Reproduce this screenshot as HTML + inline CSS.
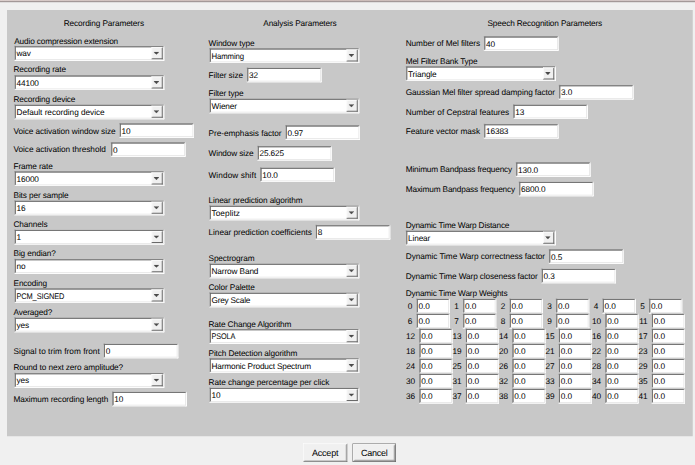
<!DOCTYPE html>
<html><head><meta charset="utf-8"><title>Parameters</title>
<style>
html,body{margin:0;padding:0;}
body{width:695px;height:465px;overflow:hidden;background:#f0f0f0;position:relative;}
.t0{position:absolute;left:0;top:0;width:695px;height:1px;background:linear-gradient(90deg,#dbcecc 0,#d2c3c0 15%,#cbbab6 45%,#d0c2c0 70%,#d4c8c8 100%);}
.t1{position:absolute;left:0;top:1px;width:695px;height:1px;background:#a39898;}
.t2{position:absolute;left:0;top:2px;width:695px;height:1px;background:#dfdddd;}
#ui{position:absolute;left:0;top:0;width:2781px;height:1860px;transform:scale(0.25);transform-origin:0 0;font-family:"Liberation Sans",sans-serif;font-size:33px;color:#000;text-rendering:geometricPrecision;letter-spacing:-0.48px;}
.panel{position:absolute;left:28px;top:40px;width:2743px;height:1705px;background:#c8c8c8;}
.l{position:absolute;white-space:nowrap;height:42px;line-height:42px;}
.s{position:absolute;box-sizing:border-box;background:#fff;border:6px solid;border-color:#a0a0a0 #fff #fff #a0a0a0;}
.s>i{position:absolute;left:-3px;top:-3px;right:-3px;bottom:-3px;border:3px solid;border-color:#696969 #e3e3e3 #e3e3e3 #696969;}
.s .tx{position:absolute;left:3px;top:4px;height:42px;line-height:42px;white-space:nowrap;}
.s .b{position:absolute;right:0;top:0;bottom:0;width:45px;box-sizing:border-box;background:#f0f0f0;border:3px solid;border-width:3px 4px 4px 3px;border-color:#fff #696969 #696969 #fff;}
.s .b svg{position:absolute;left:6px;top:15px;}
.g{position:absolute;white-space:nowrap;height:42px;line-height:42px;text-align:right;width:90px;}
.btn{position:absolute;box-sizing:border-box;background:#f0f0f0;font-size:36px;text-align:center;letter-spacing:-1px;}
</style></head><body>
<div id="ui">
<div class="panel"></div>
<div class="l" style="left:255px;top:70px;">Recording Parameters</div>
<div class="l" style="left:1053px;top:70px;">Analysis Parameters</div>
<div class="l" style="left:1950px;top:70px;letter-spacing:-0.58px;">Speech Recognition Parameters</div>
<div class="l" style="left:1623px;top:1152px;letter-spacing:-0.68px;">Dynamic Time Warp Weights</div>
<div class="l" style="left:57px;top:143px;letter-spacing:-0.59px;">Audio compression extension</div>
<div class="s" style="left:57px;top:183px;width:600px;height:60px;"><i></i><span class="tx" style="top:4px;">wav</span><span class="b"><svg width="21" height="12" viewBox="0 0 7 4"><path d="M0 0h7v1h-1v1h-1v1h-1v1h-1v-1h-1v-1h-1v-1h-1z" fill="#4a4a4a"/></svg></span></div>
<div class="l" style="left:54px;top:256px;">Recording rate</div>
<div class="s" style="left:57px;top:300px;width:600px;height:60px;"><i></i><span class="tx" style="top:4px;">44100</span><span class="b"><svg width="21" height="12" viewBox="0 0 7 4"><path d="M0 0h7v1h-1v1h-1v1h-1v1h-1v-1h-1v-1h-1v-1h-1z" fill="#4a4a4a"/></svg></span></div>
<div class="l" style="left:54px;top:375px;">Recording device</div>
<div class="s" style="left:57px;top:417px;width:600px;height:60px;"><i></i><span class="tx" style="top:4px;letter-spacing:-0.15px;">Default recording device</span><span class="b"><svg width="21" height="12" viewBox="0 0 7 4"><path d="M0 0h7v1h-1v1h-1v1h-1v1h-1v-1h-1v-1h-1v-1h-1z" fill="#4a4a4a"/></svg></span></div>
<div class="l" style="left:54px;top:642px;">Frame rate</div>
<div class="s" style="left:57px;top:684px;width:600px;height:60px;"><i></i><span class="tx" style="top:4px;">16000</span><span class="b"><svg width="21" height="12" viewBox="0 0 7 4"><path d="M0 0h7v1h-1v1h-1v1h-1v1h-1v-1h-1v-1h-1v-1h-1z" fill="#4a4a4a"/></svg></span></div>
<div class="l" style="left:54px;top:759px;">Bits per sample</div>
<div class="s" style="left:57px;top:801px;width:600px;height:60px;"><i></i><span class="tx" style="top:4px;">16</span><span class="b"><svg width="21" height="12" viewBox="0 0 7 4"><path d="M0 0h7v1h-1v1h-1v1h-1v1h-1v-1h-1v-1h-1v-1h-1z" fill="#4a4a4a"/></svg></span></div>
<div class="l" style="left:54px;top:876px;">Channels</div>
<div class="s" style="left:57px;top:918px;width:600px;height:60px;"><i></i><span class="tx" style="top:4px;">1</span><span class="b"><svg width="21" height="12" viewBox="0 0 7 4"><path d="M0 0h7v1h-1v1h-1v1h-1v1h-1v-1h-1v-1h-1v-1h-1z" fill="#4a4a4a"/></svg></span></div>
<div class="l" style="left:54px;top:993px;">Big endian?</div>
<div class="s" style="left:57px;top:1035px;width:600px;height:60px;"><i></i><span class="tx" style="top:4px;">no</span><span class="b"><svg width="21" height="12" viewBox="0 0 7 4"><path d="M0 0h7v1h-1v1h-1v1h-1v1h-1v-1h-1v-1h-1v-1h-1z" fill="#4a4a4a"/></svg></span></div>
<div class="l" style="left:54px;top:1110px;">Encoding</div>
<div class="s" style="left:57px;top:1152px;width:600px;height:60px;"><i></i><span class="tx" style="top:4px;transform:scaleX(0.897);transform-origin:0 0;">PCM_SIGNED</span><span class="b"><svg width="21" height="12" viewBox="0 0 7 4"><path d="M0 0h7v1h-1v1h-1v1h-1v1h-1v-1h-1v-1h-1v-1h-1z" fill="#4a4a4a"/></svg></span></div>
<div class="l" style="left:54px;top:1227px;">Averaged?</div>
<div class="s" style="left:57px;top:1269px;width:600px;height:60px;"><i></i><span class="tx" style="top:4px;">yes</span><span class="b"><svg width="21" height="12" viewBox="0 0 7 4"><path d="M0 0h7v1h-1v1h-1v1h-1v1h-1v-1h-1v-1h-1v-1h-1z" fill="#4a4a4a"/></svg></span></div>
<div class="l" style="left:54px;top:1449px;letter-spacing:-0.38px;">Round to next zero amplitude?</div>
<div class="s" style="left:57px;top:1491px;width:600px;height:60px;"><i></i><span class="tx" style="top:4px;">yes</span><span class="b"><svg width="21" height="12" viewBox="0 0 7 4"><path d="M0 0h7v1h-1v1h-1v1h-1v1h-1v-1h-1v-1h-1v-1h-1z" fill="#4a4a4a"/></svg></span></div>
<div class="l" style="left:834px;top:150px;">Window type</div>
<div class="s" style="left:837px;top:192px;width:600px;height:60px;"><i></i><span class="tx" style="top:4px;transform:scaleX(0.945);transform-origin:0 0;">Hamming</span><span class="b"><svg width="21" height="12" viewBox="0 0 7 4"><path d="M0 0h7v1h-1v1h-1v1h-1v1h-1v-1h-1v-1h-1v-1h-1z" fill="#4a4a4a"/></svg></span></div>
<div class="l" style="left:834px;top:351px;">Filter type</div>
<div class="s" style="left:837px;top:393px;width:600px;height:60px;"><i></i><span class="tx" style="top:4px;">Wiener</span><span class="b"><svg width="21" height="12" viewBox="0 0 7 4"><path d="M0 0h7v1h-1v1h-1v1h-1v1h-1v-1h-1v-1h-1v-1h-1z" fill="#4a4a4a"/></svg></span></div>
<div class="l" style="left:834px;top:779px;">Linear prediction algorithm</div>
<div class="s" style="left:837px;top:821px;width:600px;height:60px;"><i></i><span class="tx" style="top:4px;letter-spacing:0.27px;">Toeplitz</span><span class="b"><svg width="21" height="12" viewBox="0 0 7 4"><path d="M0 0h7v1h-1v1h-1v1h-1v1h-1v-1h-1v-1h-1v-1h-1z" fill="#4a4a4a"/></svg></span></div>
<div class="l" style="left:834px;top:1011px;">Spectrogram</div>
<div class="s" style="left:837px;top:1053px;width:600px;height:60px;"><i></i><span class="tx" style="top:4px;">Narrow Band</span><span class="b"><svg width="21" height="12" viewBox="0 0 7 4"><path d="M0 0h7v1h-1v1h-1v1h-1v1h-1v-1h-1v-1h-1v-1h-1z" fill="#4a4a4a"/></svg></span></div>
<div class="l" style="left:834px;top:1127px;">Color Palette</div>
<div class="s" style="left:837px;top:1169px;width:600px;height:60px;"><i></i><span class="tx" style="top:4px;letter-spacing:-0.88px;">Grey Scale</span><span class="b"><svg width="21" height="12" viewBox="0 0 7 4"><path d="M0 0h7v1h-1v1h-1v1h-1v1h-1v-1h-1v-1h-1v-1h-1z" fill="#4a4a4a"/></svg></span></div>
<div class="l" style="left:834px;top:1275px;">Rate Change Algorithm</div>
<div class="s" style="left:837px;top:1315px;width:600px;height:60px;"><i></i><span class="tx" style="top:4px;transform:scaleX(0.885);transform-origin:0 0;">PSOLA</span><span class="b"><svg width="21" height="12" viewBox="0 0 7 4"><path d="M0 0h7v1h-1v1h-1v1h-1v1h-1v-1h-1v-1h-1v-1h-1z" fill="#4a4a4a"/></svg></span></div>
<div class="l" style="left:834px;top:1390px;">Pitch Detection algorithm</div>
<div class="s" style="left:837px;top:1432px;width:600px;height:60px;"><i></i><span class="tx" style="top:4px;letter-spacing:-0.68px;">Harmonic Product Spectrum</span><span class="b"><svg width="21" height="12" viewBox="0 0 7 4"><path d="M0 0h7v1h-1v1h-1v1h-1v1h-1v-1h-1v-1h-1v-1h-1z" fill="#4a4a4a"/></svg></span></div>
<div class="l" style="left:834px;top:1508px;letter-spacing:-0.26px;">Rate change percentage per click</div>
<div class="s" style="left:837px;top:1550px;width:600px;height:60px;"><i></i><span class="tx" style="top:4px;">10</span><span class="b"><svg width="21" height="12" viewBox="0 0 7 4"><path d="M0 0h7v1h-1v1h-1v1h-1v1h-1v-1h-1v-1h-1v-1h-1z" fill="#4a4a4a"/></svg></span></div>
<div class="l" style="left:1623px;top:222px;letter-spacing:-0.68px;">Mel Filter Bank Type</div>
<div class="s" style="left:1623px;top:264px;width:600px;height:60px;"><i></i><span class="tx" style="top:4px;">Triangle</span><span class="b"><svg width="21" height="12" viewBox="0 0 7 4"><path d="M0 0h7v1h-1v1h-1v1h-1v1h-1v-1h-1v-1h-1v-1h-1z" fill="#4a4a4a"/></svg></span></div>
<div class="l" style="left:1623px;top:879px;letter-spacing:-0.75px;">Dynamic Time Warp Distance</div>
<div class="s" style="left:1623px;top:921px;width:600px;height:60px;"><i></i><span class="tx" style="top:4px;">Linear</span><span class="b"><svg width="21" height="12" viewBox="0 0 7 4"><path d="M0 0h7v1h-1v1h-1v1h-1v1h-1v-1h-1v-1h-1v-1h-1z" fill="#4a4a4a"/></svg></span></div>
<div class="l" style="left:54px;top:503px;letter-spacing:-0.30px;">Voice activation window size</div>
<div class="s" style="left:477px;top:492px;width:299px;height:59px;"><i></i><span class="tx">10</span></div>
<div class="l" style="left:54px;top:577px;letter-spacing:-0.20px;">Voice activation threshold</div>
<div class="s" style="left:443px;top:568px;width:299px;height:59px;"><i></i><span class="tx">0</span></div>
<div class="l" style="left:54px;top:1383px;letter-spacing:0.08px;">Signal to trim from front</div>
<div class="s" style="left:414px;top:1374px;width:299px;height:59px;"><i></i><span class="tx">0</span></div>
<div class="l" style="left:54px;top:1575px;letter-spacing:-0.41px;">Maximum recording length</div>
<div class="s" style="left:448px;top:1566px;width:299px;height:59px;"><i></i><span class="tx">10</span></div>
<div class="l" style="left:834px;top:279px;letter-spacing:-0.29px;">Filter size</div>
<div class="s" style="left:987px;top:270px;width:299px;height:59px;"><i></i><span class="tx">32</span></div>
<div class="l" style="left:834px;top:511px;letter-spacing:-0.17px;">Pre-emphasis factor</div>
<div class="s" style="left:1141px;top:500px;width:299px;height:59px;"><i></i><span class="tx">0.97</span></div>
<div class="l" style="left:834px;top:592px;letter-spacing:-0.48px;">Window size</div>
<div class="s" style="left:1029px;top:583px;width:299px;height:59px;"><i></i><span class="tx">25.625</span></div>
<div class="l" style="left:834px;top:678px;letter-spacing:0.33px;">Window shift</div>
<div class="s" style="left:1040px;top:669px;width:299px;height:59px;"><i></i><span class="tx">10.0</span></div>
<div class="l" style="left:834px;top:908px;letter-spacing:-0.15px;">Linear prediction coefficients</div>
<div class="s" style="left:1262px;top:899px;width:299px;height:59px;"><i></i><span class="tx">8</span></div>
<div class="l" style="left:1623px;top:153px;letter-spacing:-0.35px;">Number of Mel filters</div>
<div class="s" style="left:1935px;top:144px;width:299px;height:59px;"><i></i><span class="tx">40</span></div>
<div class="l" style="left:1623px;top:348px;letter-spacing:-0.34px;">Gaussian Mel filter spread damping factor</div>
<div class="s" style="left:2235px;top:339px;width:299px;height:59px;"><i></i><span class="tx">3.0</span></div>
<div class="l" style="left:1623px;top:426px;letter-spacing:-0.02px;">Number of Cepstral features</div>
<div class="s" style="left:2052px;top:417px;width:299px;height:59px;"><i></i><span class="tx">13</span></div>
<div class="l" style="left:1623px;top:504px;letter-spacing:-0.20px;">Feature vector mask</div>
<div class="s" style="left:1935px;top:495px;width:299px;height:59px;"><i></i><span class="tx">16383</span></div>
<div class="l" style="left:1623px;top:657px;letter-spacing:-0.73px;">Minimum Bandpass frequency</div>
<div class="s" style="left:2063px;top:648px;width:299px;height:59px;"><i></i><span class="tx">130.0</span></div>
<div class="l" style="left:1623px;top:735px;letter-spacing:-0.62px;">Maximum Bandpass frequency</div>
<div class="s" style="left:2075px;top:726px;width:299px;height:59px;"><i></i><span class="tx">6800.0</span></div>
<div class="l" style="left:1623px;top:1005px;letter-spacing:-0.28px;">Dynamic Time Warp correctness factor</div>
<div class="s" style="left:2195px;top:996px;width:299px;height:59px;"><i></i><span class="tx">0.5</span></div>
<div class="l" style="left:1623px;top:1083px;letter-spacing:-0.48px;">Dynamic Time Warp closeness factor</div>
<div class="s" style="left:2165px;top:1074px;width:299px;height:59px;"><i></i><span class="tx">0.3</span></div>
<div class="g" style="left:1559px;top:1203px;">0</div><div class="s" style="left:1665px;top:1194px;width:134px;height:60px;"><i></i><span class="tx">0.0</span></div>
<div class="g" style="left:1745px;top:1203px;">1</div><div class="s" style="left:1851px;top:1194px;width:134px;height:60px;"><i></i><span class="tx">0.0</span></div>
<div class="g" style="left:1931px;top:1203px;">2</div><div class="s" style="left:2037px;top:1194px;width:134px;height:60px;"><i></i><span class="tx">0.0</span></div>
<div class="g" style="left:2117px;top:1203px;">3</div><div class="s" style="left:2223px;top:1194px;width:134px;height:60px;"><i></i><span class="tx">0.0</span></div>
<div class="g" style="left:2303px;top:1203px;">4</div><div class="s" style="left:2409px;top:1194px;width:134px;height:60px;"><i></i><span class="tx">0.0</span></div>
<div class="g" style="left:2489px;top:1203px;">5</div><div class="s" style="left:2595px;top:1194px;width:134px;height:60px;"><i></i><span class="tx">0.0</span></div>
<div class="g" style="left:1559px;top:1263px;">6</div><div class="s" style="left:1665px;top:1254px;width:134px;height:60px;"><i></i><span class="tx">0.0</span></div>
<div class="g" style="left:1745px;top:1263px;">7</div><div class="s" style="left:1851px;top:1254px;width:134px;height:60px;"><i></i><span class="tx">0.0</span></div>
<div class="g" style="left:1931px;top:1263px;">8</div><div class="s" style="left:2037px;top:1254px;width:134px;height:60px;"><i></i><span class="tx">0.0</span></div>
<div class="g" style="left:2117px;top:1263px;">9</div><div class="s" style="left:2223px;top:1254px;width:134px;height:60px;"><i></i><span class="tx">0.0</span></div>
<div class="g" style="left:2314px;top:1263px;">10</div><div class="s" style="left:2420px;top:1254px;width:134px;height:60px;"><i></i><span class="tx">0.0</span></div>
<div class="g" style="left:2500px;top:1263px;">11</div><div class="s" style="left:2606px;top:1254px;width:134px;height:60px;"><i></i><span class="tx">0.0</span></div>
<div class="g" style="left:1570px;top:1323px;">12</div><div class="s" style="left:1676px;top:1314px;width:134px;height:60px;"><i></i><span class="tx">0.0</span></div>
<div class="g" style="left:1756px;top:1323px;">13</div><div class="s" style="left:1862px;top:1314px;width:134px;height:60px;"><i></i><span class="tx">0.0</span></div>
<div class="g" style="left:1942px;top:1323px;">14</div><div class="s" style="left:2048px;top:1314px;width:134px;height:60px;"><i></i><span class="tx">0.0</span></div>
<div class="g" style="left:2128px;top:1323px;">15</div><div class="s" style="left:2234px;top:1314px;width:134px;height:60px;"><i></i><span class="tx">0.0</span></div>
<div class="g" style="left:2314px;top:1323px;">16</div><div class="s" style="left:2420px;top:1314px;width:134px;height:60px;"><i></i><span class="tx">0.0</span></div>
<div class="g" style="left:2500px;top:1323px;">17</div><div class="s" style="left:2606px;top:1314px;width:134px;height:60px;"><i></i><span class="tx">0.0</span></div>
<div class="g" style="left:1570px;top:1383px;">18</div><div class="s" style="left:1676px;top:1374px;width:134px;height:60px;"><i></i><span class="tx">0.0</span></div>
<div class="g" style="left:1756px;top:1383px;">19</div><div class="s" style="left:1862px;top:1374px;width:134px;height:60px;"><i></i><span class="tx">0.0</span></div>
<div class="g" style="left:1942px;top:1383px;">20</div><div class="s" style="left:2048px;top:1374px;width:134px;height:60px;"><i></i><span class="tx">0.0</span></div>
<div class="g" style="left:2128px;top:1383px;">21</div><div class="s" style="left:2234px;top:1374px;width:134px;height:60px;"><i></i><span class="tx">0.0</span></div>
<div class="g" style="left:2314px;top:1383px;">22</div><div class="s" style="left:2420px;top:1374px;width:134px;height:60px;"><i></i><span class="tx">0.0</span></div>
<div class="g" style="left:2500px;top:1383px;">23</div><div class="s" style="left:2606px;top:1374px;width:134px;height:60px;"><i></i><span class="tx">0.0</span></div>
<div class="g" style="left:1570px;top:1443px;">24</div><div class="s" style="left:1676px;top:1434px;width:134px;height:60px;"><i></i><span class="tx">0.0</span></div>
<div class="g" style="left:1756px;top:1443px;">25</div><div class="s" style="left:1862px;top:1434px;width:134px;height:60px;"><i></i><span class="tx">0.0</span></div>
<div class="g" style="left:1942px;top:1443px;">26</div><div class="s" style="left:2048px;top:1434px;width:134px;height:60px;"><i></i><span class="tx">0.0</span></div>
<div class="g" style="left:2128px;top:1443px;">27</div><div class="s" style="left:2234px;top:1434px;width:134px;height:60px;"><i></i><span class="tx">0.0</span></div>
<div class="g" style="left:2314px;top:1443px;">28</div><div class="s" style="left:2420px;top:1434px;width:134px;height:60px;"><i></i><span class="tx">0.0</span></div>
<div class="g" style="left:2500px;top:1443px;">29</div><div class="s" style="left:2606px;top:1434px;width:134px;height:60px;"><i></i><span class="tx">0.0</span></div>
<div class="g" style="left:1570px;top:1503px;">30</div><div class="s" style="left:1676px;top:1494px;width:134px;height:60px;"><i></i><span class="tx">0.0</span></div>
<div class="g" style="left:1756px;top:1503px;">31</div><div class="s" style="left:1862px;top:1494px;width:134px;height:60px;"><i></i><span class="tx">0.0</span></div>
<div class="g" style="left:1942px;top:1503px;">32</div><div class="s" style="left:2048px;top:1494px;width:134px;height:60px;"><i></i><span class="tx">0.0</span></div>
<div class="g" style="left:2128px;top:1503px;">33</div><div class="s" style="left:2234px;top:1494px;width:134px;height:60px;"><i></i><span class="tx">0.0</span></div>
<div class="g" style="left:2314px;top:1503px;">34</div><div class="s" style="left:2420px;top:1494px;width:134px;height:60px;"><i></i><span class="tx">0.0</span></div>
<div class="g" style="left:2500px;top:1503px;">35</div><div class="s" style="left:2606px;top:1494px;width:134px;height:60px;"><i></i><span class="tx">0.0</span></div>
<div class="g" style="left:1570px;top:1563px;">36</div><div class="s" style="left:1676px;top:1554px;width:134px;height:60px;"><i></i><span class="tx">0.0</span></div>
<div class="g" style="left:1756px;top:1563px;">37</div><div class="s" style="left:1862px;top:1554px;width:134px;height:60px;"><i></i><span class="tx">0.0</span></div>
<div class="g" style="left:1942px;top:1563px;">38</div><div class="s" style="left:2048px;top:1554px;width:134px;height:60px;"><i></i><span class="tx">0.0</span></div>
<div class="g" style="left:2128px;top:1563px;">39</div><div class="s" style="left:2234px;top:1554px;width:134px;height:60px;"><i></i><span class="tx">0.0</span></div>
<div class="g" style="left:2314px;top:1563px;">40</div><div class="s" style="left:2420px;top:1554px;width:134px;height:60px;"><i></i><span class="tx">0.0</span></div>
<div class="g" style="left:2500px;top:1563px;">41</div><div class="s" style="left:2606px;top:1554px;width:134px;height:60px;"><i></i><span class="tx">0.0</span></div>
<div class="btn" style="left:1212px;top:1774px;width:177px;height:74px;border:3px solid;border-color:#fff #696969 #696969 #fff;line-height:68px;"><div style="position:absolute;left:0;top:0;right:0;bottom:0;border:3px solid;border-color:#f0f0f0 #a0a0a0 #a0a0a0 #f0f0f0;"></div>Accept</div>
<div class="btn" style="left:1410px;top:1774px;width:174px;height:74px;border:3px solid #696969;line-height:68px;"><div style="position:absolute;left:0;top:0;right:0;bottom:0;border:3px solid;border-color:#fff #696969 #696969 #fff;"><div style="position:absolute;left:0;top:0;right:0;bottom:0;border:3px solid;border-color:#f0f0f0 #a0a0a0 #a0a0a0 #f0f0f0;"></div></div>Cancel</div>
</div>
<div class="t0"></div><div class="t1"></div><div class="t2"></div>
</body></html>
